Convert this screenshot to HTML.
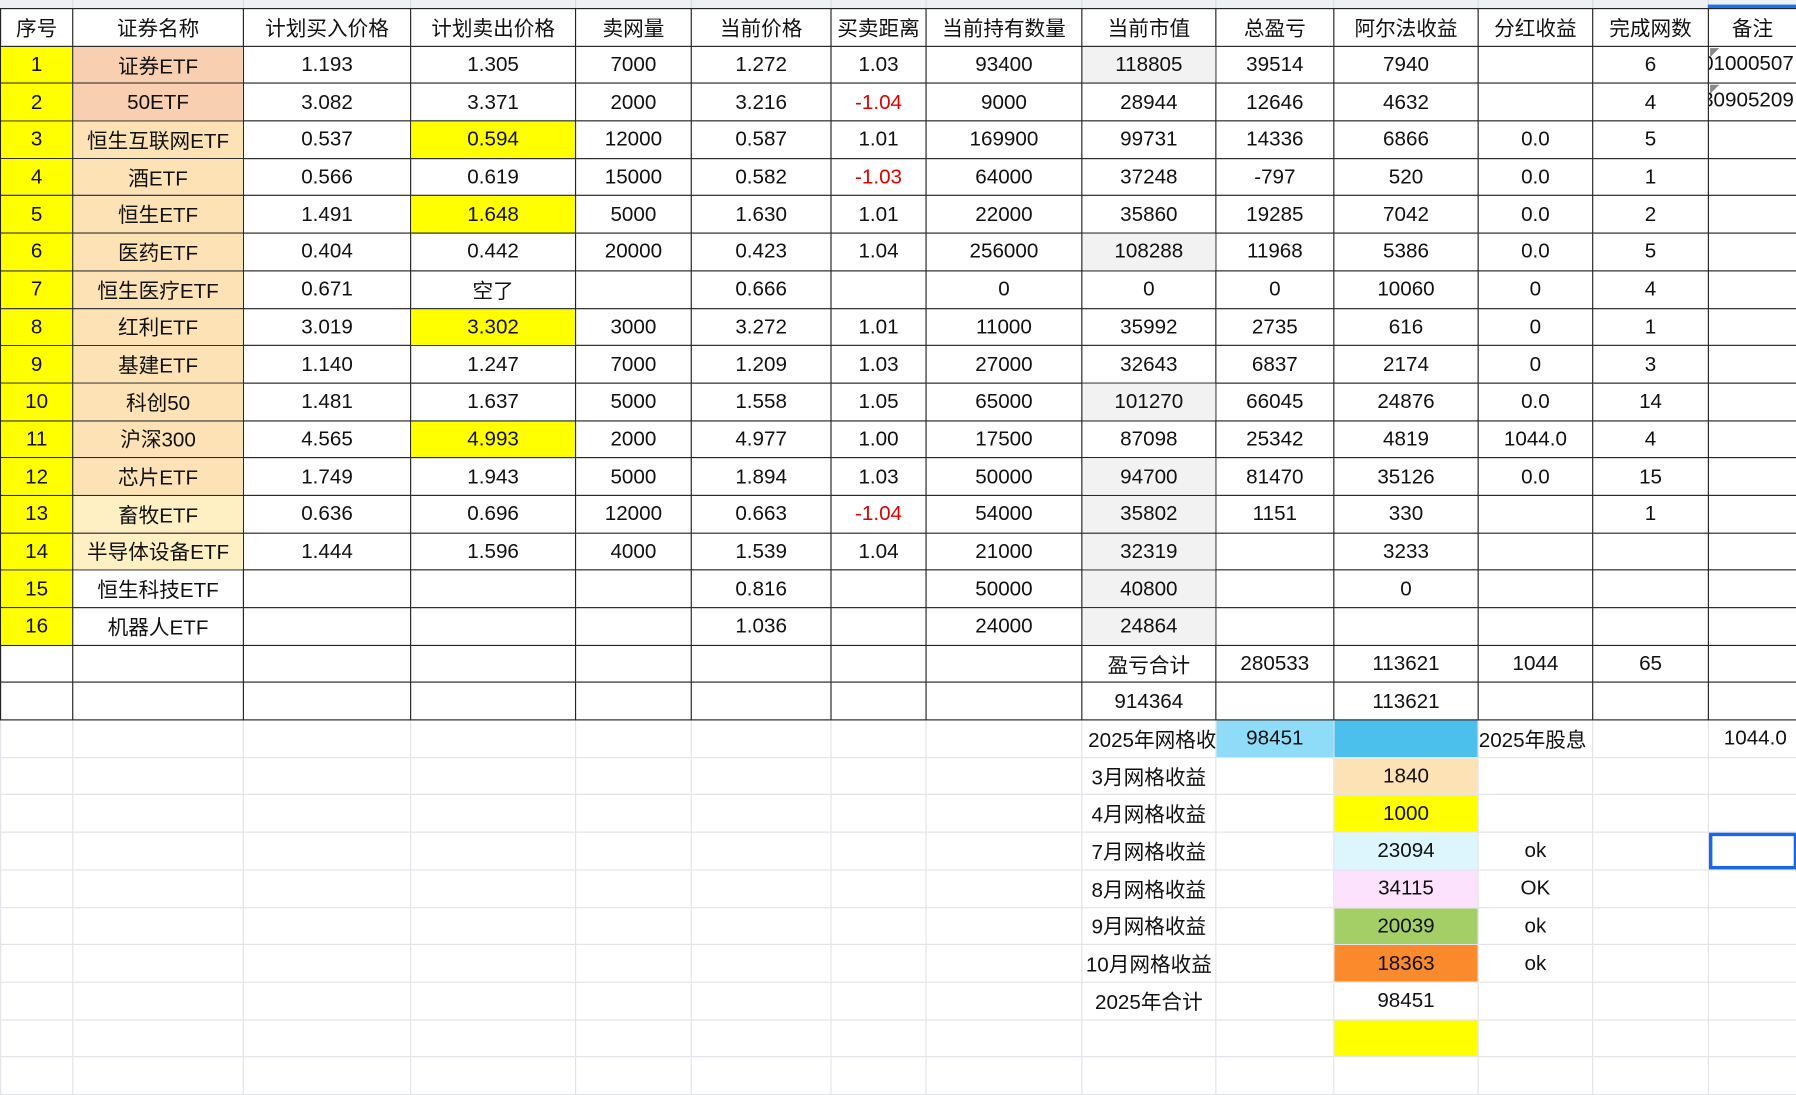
<!DOCTYPE html>
<html><head><meta charset="utf-8"><style>
html,body{margin:0;padding:0;background:#fff;width:1796px;height:1062px;overflow:hidden}
#w{position:absolute;left:0;top:0;width:1568px;height:928px;transform:scale(1.14541);transform-origin:0 0}
.strip{position:absolute;left:0;top:0;width:1568px;height:7px;background:#eef0f3}
.strip i{position:absolute;top:0;width:1px;height:7px;background:#d8dbe0}
table{position:absolute;left:0;top:7px;width:1568px;border-collapse:collapse;table-layout:fixed;font-family:"Liberation Sans","Noto Sans CJK SC",sans-serif;font-size:18px;color:#111}
td{height:31.7px;padding:0;text-align:center;border:1px solid #e2e3e8;white-space:nowrap;overflow:hidden;position:relative}
.k td{border:1.6px solid #222}
.y{background:#ffff00}.p{background:#f8cfb0}.o{background:#fde2b6}.l{background:#fff0c3}.g{background:#f2f2f2}
.r{color:#e00000}
.n{text-align:left}
.nt span{position:absolute;left:-6px;top:4px}
.nt b{position:absolute;left:1px;top:1px;width:0;height:0;border-top:8px solid #888;border-right:8px solid transparent}
</style></head><body><div id="w">
<div class="strip"><i style="left:63px"></i><i style="left:212px"></i><i style="left:358px"></i><i style="left:502px"></i><i style="left:603px"></i><i style="left:725px"></i><i style="left:808px"></i><i style="left:944px"></i><i style="left:1061px"></i><i style="left:1164px"></i><i style="left:1290px"></i><i style="left:1390px"></i><i style="left:1491px"></i><div style="position:absolute;left:1491px;top:4px;width:77px;height:3px;background:#1a73e8"></div></div>
<table>
<colgroup><col style="width:63px"><col style="width:149px"><col style="width:146px"><col style="width:144px"><col style="width:101px"><col style="width:122px"><col style="width:83px"><col style="width:136px"><col style="width:117px"><col style="width:103px"><col style="width:126px"><col style="width:100px"><col style="width:101px"><col style="width:77px"></colgroup>
<tbody class="k">
<tr><td>序号</td><td>证券名称</td><td>计划买入价格</td><td>计划卖出价格</td><td>卖网量</td><td>当前价格</td><td>买卖距离</td><td>当前持有数量</td><td>当前市值</td><td>总盈亏</td><td>阿尔法收益</td><td>分红收益</td><td>完成网数</td><td>备注</td></tr>
<tr><td class="y">1</td><td class="p">证券ETF</td><td>1.193</td><td>1.305</td><td>7000</td><td>1.272</td><td>1.03</td><td>93400</td><td class="g">118805</td><td>39514</td><td>7940</td><td></td><td>6</td><td class="nt"><b></b><span>01000507</span></td></tr>
<tr><td class="y">2</td><td class="p">50ETF</td><td>3.082</td><td>3.371</td><td>2000</td><td>3.216</td><td class="r">-1.04</td><td>9000</td><td>28944</td><td>12646</td><td>4632</td><td></td><td>4</td><td class="nt"><b></b><span>30905209</span></td></tr>
<tr><td class="y">3</td><td class="o">恒生互联网ETF</td><td>0.537</td><td class="y">0.594</td><td>12000</td><td>0.587</td><td>1.01</td><td>169900</td><td>99731</td><td>14336</td><td>6866</td><td>0.0</td><td>5</td><td></td></tr>
<tr><td class="y">4</td><td class="o">酒ETF</td><td>0.566</td><td>0.619</td><td>15000</td><td>0.582</td><td class="r">-1.03</td><td>64000</td><td>37248</td><td>-797</td><td>520</td><td>0.0</td><td>1</td><td></td></tr>
<tr><td class="y">5</td><td class="o">恒生ETF</td><td>1.491</td><td class="y">1.648</td><td>5000</td><td>1.630</td><td>1.01</td><td>22000</td><td>35860</td><td>19285</td><td>7042</td><td>0.0</td><td>2</td><td></td></tr>
<tr><td class="y">6</td><td class="o">医药ETF</td><td>0.404</td><td>0.442</td><td>20000</td><td>0.423</td><td>1.04</td><td>256000</td><td class="g">108288</td><td>11968</td><td>5386</td><td>0.0</td><td>5</td><td></td></tr>
<tr><td class="y">7</td><td class="o">恒生医疗ETF</td><td>0.671</td><td>空了</td><td></td><td>0.666</td><td></td><td>0</td><td>0</td><td>0</td><td>10060</td><td>0</td><td>4</td><td></td></tr>
<tr><td class="y">8</td><td class="o">红利ETF</td><td>3.019</td><td class="y">3.302</td><td>3000</td><td>3.272</td><td>1.01</td><td>11000</td><td>35992</td><td>2735</td><td>616</td><td>0</td><td>1</td><td></td></tr>
<tr><td class="y">9</td><td class="o">基建ETF</td><td>1.140</td><td>1.247</td><td>7000</td><td>1.209</td><td>1.03</td><td>27000</td><td>32643</td><td>6837</td><td>2174</td><td>0</td><td>3</td><td></td></tr>
<tr><td class="y">10</td><td class="o">科创50</td><td>1.481</td><td>1.637</td><td>5000</td><td>1.558</td><td>1.05</td><td>65000</td><td class="g">101270</td><td>66045</td><td>24876</td><td>0.0</td><td>14</td><td></td></tr>
<tr><td class="y">11</td><td class="o">沪深300</td><td>4.565</td><td class="y">4.993</td><td>2000</td><td>4.977</td><td>1.00</td><td>17500</td><td>87098</td><td>25342</td><td>4819</td><td>1044.0</td><td>4</td><td></td></tr>
<tr><td class="y">12</td><td class="o">芯片ETF</td><td>1.749</td><td>1.943</td><td>5000</td><td>1.894</td><td>1.03</td><td>50000</td><td class="g">94700</td><td>81470</td><td>35126</td><td>0.0</td><td>15</td><td></td></tr>
<tr><td class="y">13</td><td class="l">畜牧ETF</td><td>0.636</td><td>0.696</td><td>12000</td><td>0.663</td><td class="r">-1.04</td><td>54000</td><td class="g">35802</td><td>1151</td><td>330</td><td></td><td>1</td><td></td></tr>
<tr><td class="y">14</td><td class="l">半导体设备ETF</td><td>1.444</td><td>1.596</td><td>4000</td><td>1.539</td><td>1.04</td><td>21000</td><td class="g">32319</td><td></td><td>3233</td><td></td><td></td><td></td></tr>
<tr><td class="y">15</td><td>恒生科技ETF</td><td></td><td></td><td></td><td>0.816</td><td></td><td>50000</td><td class="g">40800</td><td></td><td>0</td><td></td><td></td><td></td></tr>
<tr><td class="y">16</td><td>机器人ETF</td><td></td><td></td><td></td><td>1.036</td><td></td><td>24000</td><td class="g">24864</td><td></td><td></td><td></td><td></td><td></td></tr>
<tr><td></td><td></td><td></td><td></td><td></td><td></td><td></td><td></td><td>盈亏合计</td><td>280533</td><td>113621</td><td>1044</td><td>65</td><td></td></tr>
<tr><td></td><td></td><td></td><td></td><td></td><td></td><td></td><td></td><td>914364</td><td></td><td>113621</td><td></td><td></td><td></td></tr>
</tbody>
<tbody>
<tr><td></td><td></td><td></td><td></td><td></td><td></td><td></td><td></td><td class="n" style="padding-left:5px">2025年网格收益</td><td style="background:#8fdcf8">98451</td><td style="background:#4bc0ec"></td><td class="n" style="overflow:visible">2025年股息</td><td></td><td style="text-align:right;padding-right:8px">1044.0</td></tr>
<tr><td></td><td></td><td></td><td></td><td></td><td></td><td></td><td></td><td>3月网格收益</td><td></td><td class="o">1840</td><td></td><td></td><td></td></tr>
<tr><td></td><td></td><td></td><td></td><td></td><td></td><td></td><td></td><td>4月网格收益</td><td></td><td class="y">1000</td><td></td><td></td><td></td></tr>
<tr><td></td><td></td><td></td><td></td><td></td><td></td><td></td><td></td><td>7月网格收益</td><td></td><td style="background:#ddf5fc">23094</td><td>ok</td><td></td><td style="outline:3px solid #1a66e8;outline-offset:-3px"></td></tr>
<tr><td></td><td></td><td></td><td></td><td></td><td></td><td></td><td></td><td>8月网格收益</td><td></td><td style="background:#fce2fc">34115</td><td>OK</td><td></td><td></td></tr>
<tr><td></td><td></td><td></td><td></td><td></td><td></td><td></td><td></td><td>9月网格收益</td><td></td><td style="background:#a3cf66">20039</td><td>ok</td><td></td><td></td></tr>
<tr><td></td><td></td><td></td><td></td><td></td><td></td><td></td><td></td><td>10月网格收益</td><td></td><td style="background:#fa8a2b">18363</td><td>ok</td><td></td><td></td></tr>
<tr><td></td><td></td><td></td><td></td><td></td><td></td><td></td><td></td><td>2025年合计</td><td></td><td>98451</td><td></td><td></td><td></td></tr>
<tr><td></td><td></td><td></td><td></td><td></td><td></td><td></td><td></td><td></td><td></td><td class="y"></td><td></td><td></td><td></td></tr>
<tr><td></td><td></td><td></td><td></td><td></td><td></td><td></td><td></td><td></td><td></td><td></td><td></td><td></td><td></td></tr>
</tbody></table>
</div></body></html>
